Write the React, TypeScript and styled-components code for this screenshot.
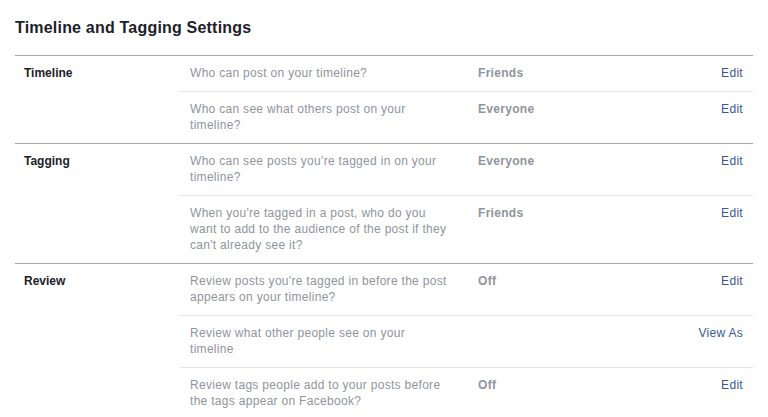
import React from 'react';
import styled, { createGlobalStyle } from 'styled-components';

type Setting = {
  question: string[];
  value?: string;
  action: string;
};

type Section = {
  label: string;
  rows: Setting[];
};

// questions are kept as the lines they wrap to in the settings panel
const sections: Section[] = [
  {
    label: 'Timeline',
    rows: [
      { question: ['Who can post on your timeline?'], value: 'Friends', action: 'Edit' },
      { question: ['Who can see what others post on your', 'timeline?'], value: 'Everyone', action: 'Edit' },
    ],
  },
  {
    label: 'Tagging',
    rows: [
      { question: ["Who can see posts you're tagged in on your", 'timeline?'], value: 'Everyone', action: 'Edit' },
      {
        question: [
          "When you're tagged in a post, who do you",
          'want to add to the audience of the post if they',
          "can't already see it?",
        ],
        value: 'Friends',
        action: 'Edit',
      },
    ],
  },
  {
    label: 'Review',
    rows: [
      { question: ["Review posts you're tagged in before the post", 'appears on your timeline?'], value: 'Off', action: 'Edit' },
      { question: ['Review what other people see on your', 'timeline'], action: 'View As' },
      { question: ['Review tags people add to your posts before', 'the tags appear on Facebook?'], value: 'Off', action: 'Edit' },
    ],
  },
];

const GlobalStyle = createGlobalStyle`
  body {
    margin: 0;
    background: #ffffff;
    font-family: "Liberation Sans", Arial, sans-serif;
  }
`;

const App = () => {
  return (
    <Page>
      <GlobalStyle />
      <Title>Timeline and Tagging Settings</Title>
      <Table>
        {sections.map((section) => (
          <SectionBlock key={section.label}>
            <SectionLabel>{section.label}</SectionLabel>
            <Rows>
              {section.rows.map((row, i) => (
                <Row key={row.question[0]} first={i === 0}>
                  <Question>
                    {row.question.map((line) => (
                      <Line key={line}>{line}</Line>
                    ))}
                  </Question>
                  <Value>{row.value}</Value>
                  <Action href="#">{row.action}</Action>
                </Row>
              ))}
            </Rows>
          </SectionBlock>
        ))}
      </Table>
    </Page>
  );
};

export default App;

const Page = styled.div`
  padding: 18px 15px 0 15px;
  width: 738px;
`;

const Title = styled.h2`
  margin: 0 0 17px 0;
  font-size: 16px;
  line-height: 20px;
  font-weight: bold;
  letter-spacing: 0.2px;
  color: #1d2129;
`;

const Table = styled.div`
  display: flex;
  flex-direction: column;
`;

const SectionBlock = styled.div`
  display: grid;
  grid-template-columns: 165px 1fr;
  border-top: 1px solid #a9abaf;
`;

const SectionLabel = styled.div`
  padding: 9px 0 0 9px;
  font-size: 12px;
  line-height: 16px;
  font-weight: bold;
  color: #1d2129;
`;

const Rows = styled.div`
  display: flex;
  flex-direction: column;
`;

const Row = styled.div<{ first: boolean }>`
  display: grid;
  grid-template-columns: 10px 270px 18px 1fr auto;
  padding: 9px 10px 10px 0;
  border-top: ${(p) => (p.first ? 'none' : '1px solid #e5e6e9')};
  font-size: 12px;
  line-height: 16px;
  letter-spacing: 0.3px;
`;

const Question = styled.div`
  grid-column: 2;
  color: #90949c;
`;

const Line = styled.div`
  white-space: nowrap;
`;

const Value = styled.div`
  grid-column: 4;
  color: #90949c;
  font-weight: bold;
`;

const Action = styled.a`
  grid-column: 5;
  color: #365899;
  text-decoration: none;
  text-align: right;
`;
